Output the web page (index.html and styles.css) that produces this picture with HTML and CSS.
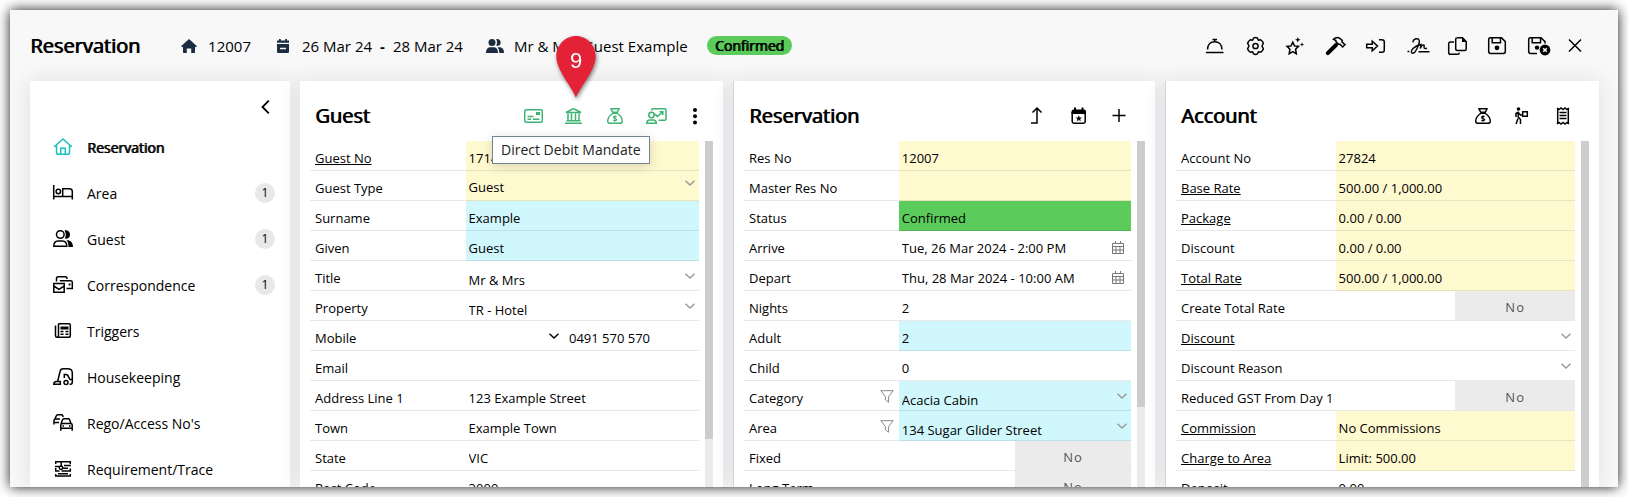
FILE: index.html
```html
<!DOCTYPE html>
<html lang="en">
<head>
    <meta charset="UTF-8">
    <meta name="viewport" content="width=device-width, initial-scale=1.0">
    <title>Reservation 12007</title>
    <link rel="stylesheet" href="styles.css">
</head>
<body>
    <!-- Shared icons -->
    <svg class="sprite" aria-hidden="true">
        <symbol id="caret" viewBox="0 0 10 6"><path d="M0.5 0.7L5 5L9.5 0.7" fill="none" stroke="currentColor" stroke-width="1.4"/></symbol>
        <symbol id="filter" viewBox="0 0 14 13"><path d="M0.8 0.7H13.2L8.6 6.6V12.2L5.4 9.8V6.6Z" fill="none" stroke="currentColor" stroke-width="1"/></symbol>
        <symbol id="calendar" viewBox="0 0 12 13"><path d="M0.5 2.5H11.5V12.5H0.5ZM0.5 5.5H11.5M0.5 9H11.5M4 5.5V12.5M8 5.5V12.5M3.5 0V3M8.5 0V3" fill="none" stroke="currentColor" stroke-width="1"/></symbol>
        <symbol id="bag" viewBox="0 0 26 26">
            <path d="M8.8 5.7H17.2L15.2 9.3H10.8ZM10.8 10.2H15.2C18.5 12.5 20.3 15.4 20.3 18.2C20.3 19.7 19.4 20.3 18 20.3H8C6.6 20.3 5.7 19.7 5.7 18.2C5.7 15.4 7.5 12.5 10.8 10.2Z" fill="none" stroke="currentColor" stroke-width="1.4" stroke-linejoin="round"/>
            <path d="M14.7 13.7C13.9 13 11.5 13 11.5 14.4C11.5 15.8 14.7 15.1 14.7 16.6C14.7 18 12 18 11.3 17.2M13 12.2V18.8" fill="none" stroke="currentColor" stroke-width="1.1"/>
        </symbol>
    </svg>

    <div class="window">
        <header class="topbar">
            <h1 class="title">Reservation</h1>
            <div class="summary">
                <span class="summary-item">
                    <svg class="icon" viewBox="0 0 26 26"><path d="M13 6L21 13.2L19.8 14.3L19 13.6V19.3Q19 20 18.3 20H15.2V15.5H10.8V20H7.7Q7 20 7 19.3V13.6L6.2 14.3L5 13.2L10 8.7Z" fill="currentColor"/></svg>
                    12007
                </span>
                <span class="summary-item">
                    <svg class="icon" viewBox="0 0 26 26"><path d="M7 7.5H9V6H10.8V7.5H15.2V6H17V7.5H19V9.8H7ZM7 11H19V18.8Q19 20 17.8 20H8.2Q7 20 7 18.8ZM10 14.7V16.3H16V14.7Z" fill="currentColor" fill-rule="evenodd"/></svg>
                    26 Mar 24 <b class="dash">-</b> 28 Mar 24
                </span>
                <span class="summary-item">
                    <svg class="icon" viewBox="0 0 26 26"><g fill="currentColor"><circle cx="10" cy="9.5" r="3.5"/><path d="M4 20C4 16 6 14.3 8.5 14.3H11.5C14 14.3 16 16 16 20Z"/><path d="M14.2 6.2C16.5 5.4 18.7 7 18.7 9.4C18.7 11.9 16.5 13.4 14.2 12.6C15.3 10.8 15.3 8 14.2 6.2ZM15.5 14.3H17.5C20.5 14.3 22 16.5 22 20H17.3C17.3 17.5 16.8 15.7 15.5 14.3Z"/></g></svg>
                    Mr &amp; Mrs Guest Example
                </span>
                <span class="status">Confirmed</span>
            </div>
            <div class="toolbar">
                <button aria-label="Service">
                    <svg class="icon line" viewBox="0 0 26 26"><path d="M3 19.5H20.5M4.5 16.5C4.5 11.5 7.5 8.7 11.7 8.7S19 11.5 19 16.5M9.5 6.5H14M11.7 6.5V8.5"/></svg>
                </button>
                <button aria-label="Settings">
                    <svg class="icon line" viewBox="0 0 26 26"><path d="M10.5 5.2Q12.5 4 14.5 5.2L15.4 7.2L17.7 6.8Q19.8 8 20.4 10.2L19 13L20.4 15.8Q19.8 18 17.7 19.2L15.4 18.8L14.5 20.8Q12.500 22 10.5 20.8L9.6 18.8L7.300 19.2Q5.200 18 4.600 15.8L6 13L4.600 10.2Q5.200 8 7.300 6.800L9.600 7.200Z" stroke-linejoin="round"/><circle cx="12.5" cy="13" r="2.6"/></svg>
                </button>
                <button aria-label="Special features">
                    <svg class="icon line" viewBox="0 0 26 26"><path d="M9.8 9.200L11.500 12.900L15.500 13.400L12.600 16.200L13.300 20.800L9.800 18.600L6.200 20.800L6.900 16.200L4 13.400L8.100 12.900Z"/><path d="M14.8 4L15.6 6L17.6 6.8L15.6 7.6L14.8 9.6L14 7.6L12 6.8L14 6ZM19 9.2L19.6 10.9L21.3 11.5L19.6 12.1L19 13.8L18.4 12.1L16.7 11.5L18.4 10.9Z" fill="currentColor" stroke="none"/></svg>
                </button>
                <button aria-label="Maintenance">
                    <svg class="icon line" viewBox="0 0 26 26"><path d="M4.8 20.2L13 12" stroke-width="4" stroke-linecap="round"/><path d="M10.5 6.3C13 4 16 4.3 18 6.3L19.3 7.6L19 9L22 11.6L19.6 14L17 11.2H15.5L12.9 8.6V7.5Z"/></svg>
                </button>
                <button aria-label="Check in">
                    <svg class="icon line" viewBox="0 0 26 26"><path d="M3.7 11.2H9.2V8.2L14.5 13L9.2 17.8V14.8H3.7ZM16 6.7H19Q21.3 6.7 21.3 9V17Q21.3 19.3 19 19.3H16"/></svg>
                </button>
                <button aria-label="Signature">
                    <svg class="icon line" viewBox="0 0 26 26"><path d="M4.500 18.500H6.300M10 9.500C10 7 12 5.700 14 5.700C16.500 5.700 17 8.500 15.500 12C13.800 16.500 12 20.300 9.800 20.300C7.800 20.300 8 17.500 10 15.500C12 13.500 15.500 12 18 11.500L17.300 15.500C18.500 12.800 20 11.500 21 12C21.700 12.500 20.500 14.500 21.300 15.300Q22 15.800 24 15.300M15.500 18.700H26.500" stroke-width="1.400"/></svg>
                </button>
                <button aria-label="Copy">
                    <svg class="icon line" viewBox="0 0 26 26"><path d="M14 4.8H19.500L23.2 8.5V16Q23.2 17.5 21.7 17.5H14.500Q12.7 17.5 12.7 16V6.3Q12.7 4.8 14.200 4.8ZM11 9H7.5Q5.7 9 5.7 10.8V19.5Q5.7 21.3 7.5 21.3H14.5Q16.3 21.3 16.3 19.7"/><path d="M19 4.5V9H23Z" fill="currentColor" stroke="none"/></svg>
                </button>
                <button aria-label="Save">
                    <svg class="icon line" viewBox="0 0 26 26"><path d="M7.5 4.8H18.5L22.3 8.6V18.5Q22.3 20.5 20.3 20.5H7.7Q5.7 20.5 5.7 18.5V6.6Q5.7 4.8 7.5 4.8ZM9.2 5V9.8H17.5V5"/><circle cx="14" cy="14.8" r="2.4" fill="currentColor" stroke="none"/></svg>
                </button>
                <button aria-label="Save and exit">
                    <svg class="icon line" viewBox="0 0 26 26"><path d="M14 20.5H7.7Q5.7 20.5 5.7 18.5V6.6Q5.7 4.8 7.5 4.8H18L22 8.6V10.5M9.2 5V9.8H17.5V5"/><circle cx="14" cy="14.6" r="2.2" fill="currentColor" stroke="none"/><circle cx="22" cy="17" r="5.4" fill="currentColor" stroke="none"/><path d="M20.2 15.2L23.8 18.8M23.8 15.2L20.2 18.8" stroke="#f8f8f8"/></svg>
                </button>
                <button aria-label="Close">
                    <svg class="icon line" viewBox="0 0 26 26"><path d="M6 6.5L18 18.5M18 6.5L6 18.5"/></svg>
                </button>
            </div>
        </header>

        <main class="content">
            <nav class="card sidebar">
                <button class="collapse" aria-label="Collapse menu">
                    <svg width="9" height="14" viewBox="0 0 9 14"><path d="M7.8 0.7L1.5 7L7.8 13.3" fill="none" stroke="currentColor" stroke-width="1.8"/></svg>
                </button>
                <a class="nav-item active" href="#reservation">
                    <svg class="icon line" viewBox="0 0 26 26"><path d="M4 13L13 5L22 13M6.5 11V18.5Q6.5 20.3 8.3 20.3H17.7Q19.5 20.3 19.5 18.5V11M10.7 20V14.3H15.3V20"/></svg>
                    Reservation
                </a>
                <a class="nav-item" href="#area">
                    <svg class="icon line" viewBox="0 0 26 26"><path d="M3.7 5V19.5M3.7 16.5H22.3M22.3 19.5V11.5Q22.3 8.7 19.5 8.7H12.7V16"/><circle cx="8.3" cy="11.5" r="2.2"/></svg>
                    Area <span class="badge">1</span>
                </a>
                <a class="nav-item" href="#guest">
                    <svg class="icon line" viewBox="0 0 26 26"><circle cx="10.3" cy="8.5" r="3.8"/><path d="M3.8 20.3C3.8 16.5 5.8 15 8 15H12.5C14.8 15 16.8 16.5 16.8 20.3Z"/><path d="M14.5 4.5C17.5 3.8 20 5.8 20 8.7C20 11.5 17.5 13.2 14.8 12.6C16.2 10 16 6.8 14.5 4.5ZM16.5 14.3C20.5 14 23 16.5 23 21H18.5C18.5 18 18 16 16.5 14.3Z" fill="currentColor" stroke="none"/></svg>
                    Guest <span class="badge">1</span>
                </a>
                <a class="nav-item" href="#correspondence">
                    <svg class="icon line" viewBox="0 0 26 26"><path d="M3.8 11.5H14.2V20.3H3.8ZM3.8 14L9 17.3L14.2 14M6.5 9.5V6.5Q6.5 4.7 8.3 4.7H15.5Q17 4.7 17 7M10.5 9.3V8.7H20.5Q22.3 8.7 22.3 10.3V16.5H16.5"/><path d="M18.7 11.5H20.5V13.5H18.7Z" fill="currentColor" stroke="none"/></svg>
                    Correspondence <span class="badge">1</span>
                </a>
                <a class="nav-item" href="#triggers">
                    <svg class="icon line" viewBox="0 0 26 26"><path d="M8.5 5.7H19Q20.3 5.7 20.3 7V17.5Q20.3 19.3 18.5 19.3H7Q5.5 19.3 5.5 17.5V7.5M8.5 5.7V17.5Q8.5 19 7 19.3"/><path d="M10.5 8.5H18.5V11.5H10.5Z" fill="currentColor" stroke="none"/><path d="M10.5 13.5H13.5M15.5 13.5H18.5M10.5 16.3H13.5M15.5 16.3H18.5"/></svg>
                    Triggers
                </a>
                <a class="nav-item" href="#housekeeping">
                    <svg class="icon line" viewBox="0 0 26 26"><path d="M3.800 20.300Q3.800 17.500 6.500 17.500H10.300V20.300ZM7.700 17L10.200 7Q10.800 4.800 13 4.800H17.500Q22.300 4.800 22.300 9V18Q22.300 20.300 20.500 20.300H19.500M14.300 14V10.500H16Q18 10.500 18.500 13L20 15.500H22"/><circle cx="16" cy="18.600" r="2"/></svg>
                    Housekeeping
                </a>
                <a class="nav-item" href="#rego">
                    <svg class="icon line" viewBox="0 0 26 26"><path d="M5 9L6.3 5.7Q6.6 4.7 7.8 4.7H11.2Q12.4 4.7 12.8 5.7L13.2 7M4 14.5V10.5Q4 9 5.5 9H10M4 12.5H9M11 13.5L12.5 9.8Q12.8 8.8 14 8.8H18Q19.2 8.8 19.6 9.8L21 13.5M10.8 20.8V15Q10.8 13.5 12.3 13.5H20.7Q22.2 13.5 22.2 15V20.8M10.8 18.3H22.2M12.5 15.9H14M19 15.9H20.5"/></svg>
                    Rego/Access No's
                </a>
                <a class="nav-item" href="#requirement">
                    <svg class="icon line" viewBox="0 0 26 26"><path d="M5 5.700H21M5.700 5V8M20.300 5V8M5 10.500H9M14 9.500H21M5 15H9.500M11.500 15H21M5 20H21M5.700 18V20M20.300 18V20M5.700 12V15M20.300 12.500V15M11.200 5V10M13 12.300H18M8 17.700H18"/><circle cx="11" cy="11.800" r="1.700"/></svg>
                    Requirement/Trace
                </a>
            </nav>

            <section class="card">
                <div class="card-head with-menu">
                    <h2 class="title">Guest</h2>
                    <div class="toolbar green">
                        <button aria-label="Guest card">
                            <svg class="icon line" viewBox="0 0 26 26"><rect x="2.7" y="6.7" width="17.6" height="12.6" rx="1.5"/><path d="M5.5 13.5H11.5M5.5 16.3H9M11 16.3H17.5"/><path d="M14 9H18V12H14Z" fill="currentColor" stroke="none"/></svg>
                        </button>
                        <div class="has-tip">
                            <button aria-label="Direct Debit Mandate">
                                <svg class="icon line" viewBox="0 0 26 26"><path d="M4 9.500L11.500 5.500L19 9.500ZM3 20.300H20M4.500 17.800H18.500M6 10.500V17M9.500 10.500V17M13.500 10.500V17M17 10.500V17"/></svg>
                            </button>
                            <span class="tooltip">Direct Debit Mandate</span>
                            <span class="marker">
                                <svg width="40" height="63" viewBox="0 0 40 63"><path d="M20 62C18 54 2 36 0.5 23C-1 11 8 0 20 0S41 11 39.5 23C38 36 22 54 20 62Z" fill="#e42237"/></svg>
                                <span class="marker-number">9</span>
                            </span>
                        </div>
                        <button aria-label="Payments"><svg class="icon"><use href="#bag"/></svg></button>
                        <button aria-label="Guest statistics">
                            <svg class="icon line" viewBox="0 0 26 26"><circle cx="9.5" cy="12" r="2.7"/><path d="M4.7 20.3Q4.7 17 8 17H11Q14.3 17 14.3 20.3ZM9.5 7.5V7Q9.5 5.7 11 5.7H22.5Q24 5.7 24 7V16Q24 17.3 22.5 17.3H16.5M13 11L15.5 13.5L20.5 9M17.5 8.7H20.8V12"/></svg>
                        </button>
                        <button class="dark" aria-label="More">
                            <svg class="icon" viewBox="0 0 26 26"><g fill="currentColor"><circle cx="13" cy="7" r="2"/><circle cx="13" cy="13.2" r="2"/><circle cx="13" cy="19.5" r="2"/></g></svg>
                        </button>
                    </div>
                </div>
                <div class="card-body">
                    <div class="fields">
                        <div class="field locked"><label for="guest-no"><a href="#guest-no">Guest No</a></label><div class="value"><input id="guest-no" value="1714" readonly></div></div>
                        <div class="field locked"><label for="guest-type">Guest Type</label><div class="value"><select id="guest-type"><option>Guest</option></select><svg class="caret"><use href="#caret"/></svg></div></div>
                        <div class="field required"><label for="surname">Surname</label><div class="value"><input id="surname" value="Example"></div></div>
                        <div class="field required"><label for="given">Given</label><div class="value"><input id="given" value="Guest"></div></div>
                        <div class="field"><label for="name-title">Title</label><div class="value"><select id="name-title"><option>Mr &amp; Mrs</option></select><svg class="caret"><use href="#caret"/></svg></div></div>
                        <div class="field"><label for="property">Property</label><div class="value"><select id="property"><option>TR - Hotel</option></select><svg class="caret"><use href="#caret"/></svg></div></div>
                        <div class="field"><label for="mobile">Mobile</label><div class="value phone"><div class="country"><select aria-label="Country code"><option></option></select><svg class="caret"><use href="#caret"/></svg></div><input id="mobile" value="0491 570 570"></div></div>
                        <div class="field"><label for="email">Email</label><div class="value"><input id="email"></div></div>
                        <div class="field"><label for="address">Address Line 1</label><div class="value"><input id="address" value="123 Example Street"></div></div>
                        <div class="field"><label for="town">Town</label><div class="value"><input id="town" value="Example Town"></div></div>
                        <div class="field"><label for="state">State</label><div class="value"><input id="state" value="VIC"></div></div>
                        <div class="field"><label for="postcode">Post Code</label><div class="value"><input id="postcode" value="3000"></div></div>
                    </div>
                    <div class="scrollbar"><div class="thumb" style="height: 86%"></div></div>
                </div>
            </section>

            <section class="card edged">
                <div class="card-head">
                    <h2 class="title">Reservation</h2>
                    <div class="toolbar">
                        <button aria-label="Move up">
                            <svg class="icon line" viewBox="0 0 26 26"><path d="M5 20H11V5.5M6.500 9.5L11 5L15.500 9.5"/></svg>
                        </button>
                        <button aria-label="Events">
                            <svg class="icon line" viewBox="0 0 26 26"><path d="M6.2 9V18.5Q6.2 20.2 7.9 20.2H17.5Q19.2 20.2 19.2 18.5V9"/><path d="M5.5 11V8.5Q5.5 6.5 7.5 6.5H8V4.5H10V6.5H15.5V4.5H17.5V6.5H18Q20 6.5 20 8.5V11ZM12.8 12.3L13.7 14.5L16 14.6L14.2 16.1L14.8 18.3L12.8 17L10.8 18.3L11.4 16.1L9.6 14.6L11.9 14.5Z" fill="currentColor" stroke="none"/></svg>
                        </button>
                        <button aria-label="Add">
                            <svg class="icon line" viewBox="0 0 26 26"><path d="M6.5 12.5H19.5M13 6V19"/></svg>
                        </button>
                    </div>
                </div>
                <div class="card-body">
                    <div class="fields">
                        <div class="field locked"><label for="res-no">Res No</label><div class="value"><input id="res-no" value="12007" readonly></div></div>
                        <div class="field locked"><label for="master-no">Master Res No</label><div class="value"><input id="master-no" readonly></div></div>
                        <div class="field confirmed"><label for="res-status">Status</label><div class="value"><input id="res-status" value="Confirmed" readonly></div></div>
                        <div class="field"><label for="arrive">Arrive</label><div class="value"><input id="arrive" value="Tue, 26 Mar 2024 - 2:00 PM"><button class="date" aria-label="Pick arrival"><svg width="12" height="13"><use href="#calendar"/></svg></button></div></div>
                        <div class="field"><label for="depart">Depart</label><div class="value"><input id="depart" value="Thu, 28 Mar 2024 - 10:00 AM"><button class="date" aria-label="Pick departure"><svg width="12" height="13"><use href="#calendar"/></svg></button></div></div>
                        <div class="field"><label for="nights">Nights</label><div class="value"><input id="nights" value="2"></div></div>
                        <div class="field required"><label for="adult">Adult</label><div class="value"><input id="adult" value="2"></div></div>
                        <div class="field"><label for="child">Child</label><div class="value"><input id="child" value="0"></div></div>
                        <div class="field required"><label for="category">Category <svg class="filter"><use href="#filter"/></svg></label><div class="value"><select id="category"><option>Acacia Cabin</option></select><svg class="caret"><use href="#caret"/></svg></div></div>
                        <div class="field required"><label for="res-area">Area <svg class="filter"><use href="#filter"/></svg></label><div class="value"><select id="res-area"><option>134 Sugar Glider Street</option></select><svg class="caret"><use href="#caret"/></svg></div></div>
                        <div class="field"><label for="fixed">Fixed</label><div class="value"><button class="toggle" id="fixed">No</button></div></div>
                        <div class="field"><label for="long-term">Long Term</label><div class="value"><button class="toggle" id="long-term">No</button></div></div>
                    </div>
                    <div class="scrollbar"><div class="thumb" style="height: 77%"></div></div>
                </div>
            </section>

            <section class="card edged">
                <div class="card-head">
                    <h2 class="title">Account</h2>
                    <div class="toolbar">
                        <button aria-label="Payments"><svg class="icon"><use href="#bag"/></svg></button>
                        <button aria-label="Transfer">
                            <svg class="icon line" viewBox="0 0 26 26"><circle cx="8.5" cy="6" r="1.8" fill="currentColor" stroke="none"/><path d="M8.2 9.5V14L10.5 16.5V21M8 15.5L6 21M6 14V10.5L8 9.3L10.5 12H13M12.7 8.7H17.3V13.3H12.7Z"/></svg>
                        </button>
                        <button aria-label="Invoice">
                            <svg class="icon line" viewBox="0 0 26 26"><path d="M7.7 5V21M18.3 5V21M9.5 9.5H16.5M9.5 12.5H16.5M9.5 15.5H16.5"/><path d="M7 5L9 6.5L11 5L13 6.5L15 5L17 6.5L19 5M7 21L9 19.5L11 21L13 19.5L15 21L17 19.5L19 21"/></svg>
                        </button>
                    </div>
                </div>
                <div class="card-body">
                    <div class="fields">
                        <div class="field locked"><label for="account-no">Account No</label><div class="value"><input id="account-no" value="27824" readonly></div></div>
                        <div class="field locked"><label for="base-rate"><a href="#base-rate">Base Rate</a></label><div class="value"><input id="base-rate" value="500.00 / 1,000.00" readonly></div></div>
                        <div class="field locked"><label for="package"><a href="#package">Package</a></label><div class="value"><input id="package" value="0.00 / 0.00" readonly></div></div>
                        <div class="field locked"><label for="discount-total">Discount</label><div class="value"><input id="discount-total" value="0.00 / 0.00" readonly></div></div>
                        <div class="field locked"><label for="total-rate"><a href="#total-rate">Total Rate</a></label><div class="value"><input id="total-rate" value="500.00 / 1,000.00" readonly></div></div>
                        <div class="field"><label for="create-total">Create Total Rate</label><div class="value"><button class="toggle" id="create-total">No</button></div></div>
                        <div class="field"><label for="discount"><a href="#discount">Discount</a></label><div class="value"><select id="discount"><option></option></select><svg class="caret"><use href="#caret"/></svg></div></div>
                        <div class="field"><label for="reason">Discount Reason</label><div class="value"><select id="reason"><option></option></select><svg class="caret"><use href="#caret"/></svg></div></div>
                        <div class="field"><label for="gst">Reduced GST From Day 1</label><div class="value"><button class="toggle" id="gst">No</button></div></div>
                        <div class="field locked"><label for="commission"><a href="#commission">Commission</a></label><div class="value"><input id="commission" value="No Commissions" readonly></div></div>
                        <div class="field locked"><label for="charge"><a href="#charge">Charge to Area</a></label><div class="value"><input id="charge" value="Limit: 500.00" readonly></div></div>
                        <div class="field"><label for="deposit">Deposit</label><div class="value"><input id="deposit" value="0.00"></div></div>
                    </div>
                    <div class="scrollbar"><div class="thumb" style="height: 100%"></div></div>
                </div>
            </section>
        </main>
    </div>
</body>
</html>
```
FILE: styles.css
```css
* {
    box-sizing: border-box;
}

body {
    margin: 0;
    height: 100vh;
    padding: 10px;
    background: #fff;
    color: #000;
    font-family: "Open Sans", sans-serif;
    font-size: 13px;
    overflow: hidden;
}

button,
input,
select {
    font: inherit;
    color: inherit;
    border: none;
    background: none;
    padding: 0;
    margin: 0;
    border-radius: 0;
}

a {
    color: inherit;
}

.sprite {
    display: none;
}

.icon {
    display: block;
    flex: none;
    width: 26px;
    height: 26px;
    overflow: visible;
}

.line {
    fill: none;
    stroke: currentColor;
    stroke-width: 1.5;
}

/* Headings use the regular cut, thickened */
.title,
.status,
.nav-item.active {
    font-weight: 400;
    text-shadow: 1px 0 0 currentColor;
}

.title {
    margin: 0;
    font-size: 20px;
    line-height: 26px;
}

/* Window frame */
.window {
    display: flex;
    flex-direction: column;
    height: 100%;
    background: #f8f8f8;
    box-shadow: 0 0 12px rgba(0, 0, 0, 0.9);
    overflow: hidden;
}

.topbar {
    display: flex;
    align-items: center;
    flex: none;
    height: 71px;
    padding: 0 29px 0 20px;
}

.summary {
    display: flex;
    align-items: center;
    gap: 19px;
    margin-left: 36px;
    font-size: 15px;
}

.summary-item {
    display: flex;
    align-items: center;
    gap: 6px;
    white-space: nowrap;
}

.summary-item .icon {
    color: #1c2c40;
}

.dash {
    margin: 0 2px;
}

.status {
    padding: 0 8px;
    border-radius: 10px;
    background: #5bcc5b;
    font-size: 14px;
    line-height: 19px;
}

.toolbar {
    display: flex;
    gap: 14px;
    margin-left: auto;
}

.toolbar button {
    display: block;
    cursor: pointer;
}

.green {
    color: #3cb371;
}

.dark {
    color: #000;
}

/* Columns */
.content {
    display: grid;
    grid-template-columns: 260px 423fr 422fr 434fr;
    gap: 10px;
    flex: 1;
    min-height: 0;
    padding: 0 19px 0 20px;
}

.card {
    display: flex;
    flex-direction: column;
    min-width: 0;
    min-height: 0;
    background: #fff;
    box-shadow: 0 0 20px rgba(50, 40, 80, 0.12);
}

.edged {
    border-left: 1px solid #d4d4d8;
}

/* Sidebar */
.collapse {
    align-self: flex-end;
    flex: none;
    height: 43px;
    padding: 12px 20px 0 0;
}

.nav-item {
    display: flex;
    align-items: center;
    flex: none;
    gap: 11px;
    height: 46px;
    padding: 0 15px 0 20px;
    font-size: 14px;
    text-decoration: none;
}

.nav-item.active .icon {
    color: #1dbfbf;
}

.badge {
    margin-left: auto;
    width: 20px;
    height: 20px;
    border-radius: 50%;
    background: #e8e8e8;
    font-size: 12px;
    line-height: 20px;
    text-align: center;
}

/* Cards */
.card-head {
    display: flex;
    align-items: center;
    flex: none;
    height: 60px;
    padding: 10px 23px 0 15px;
}

.card-head.with-menu {
    padding-right: 15px;
}

.card-body {
    display: flex;
    gap: 6px;
    flex: 1;
    min-height: 0;
    padding: 0 10px;
}

.fields {
    flex: 1;
    min-width: 0;
    overflow: hidden;
}

.scrollbar {
    width: 8px;
    background: #ebebeb;
}

.thumb {
    background: #cdcdcd;
}

/* Field rows */
.field {
    display: grid;
    grid-template-columns: 2fr 3fr;
    height: 30px;
}

.field label,
.value {
    display: flex;
    position: relative;
    min-width: 0;
    border-bottom: 1px solid rgba(0, 0, 0, 0.09);
}

.field label {
    align-items: center;
    padding: 4px 5px 0 5px;
    white-space: nowrap;
}

.value input,
.value select {
    flex: 1;
    width: 100%;
    min-width: 0;
    height: 29px;
    padding: 4px 3px 0 3px;
    outline: none;
}

.value select {
    appearance: none;
    padding-top: 8px;
}

.locked .value {
    background: #fff9d0;
}

.locked select {
    padding-top: 2px;
}

.required .value {
    background: #cff7fc;
}

.confirmed .value {
    background: #5bcc5b;
}

.caret {
    position: absolute;
    right: 4px;
    top: 12px;
    width: 10px;
    height: 6px;
    color: #999;
    pointer-events: none;
}

.locked .caret {
    top: 9px;
}

.filter {
    width: 14px;
    height: 13px;
    margin-left: auto;
    margin-bottom: 3px;
    color: #888;
}

.date {
    display: flex;
    align-items: center;
    padding: 4px 7px 0 0;
    color: #777;
}

.phone {
    gap: 7px;
}

.country {
    position: relative;
    width: 40%;
}

.country .caret {
    right: 0;
    color: #000;
}

.toggle {
    width: 50%;
    margin-left: auto;
    padding-top: 2px;
    background: #ebebeb;
    color: #555;
    letter-spacing: 1px;
}

/* Tooltip and callout pin */
.has-tip {
    position: relative;
}

.tooltip {
    position: absolute;
    top: 33px;
    left: -70px;
    z-index: 2;
    padding: 0 8px;
    border: 1px solid #72858c;
    background: #fff;
    color: #222;
    font-size: 14px;
    line-height: 26px;
    white-space: nowrap;
    box-shadow: 0 2px 12px rgba(0, 0, 0, 0.15);
}

.marker {
    position: absolute;
    top: -67px;
    left: -6px;
    z-index: 3;
    filter: drop-shadow(1px 2px 2px rgba(0, 0, 0, 0.5));
}

.marker svg {
    display: block;
}

.marker-number {
    position: absolute;
    inset: 12px 0 auto 0;
    color: #fff;
    font-family: "Liberation Sans", sans-serif;
    font-size: 22px;
    line-height: 26px;
    text-align: center;
}
```
